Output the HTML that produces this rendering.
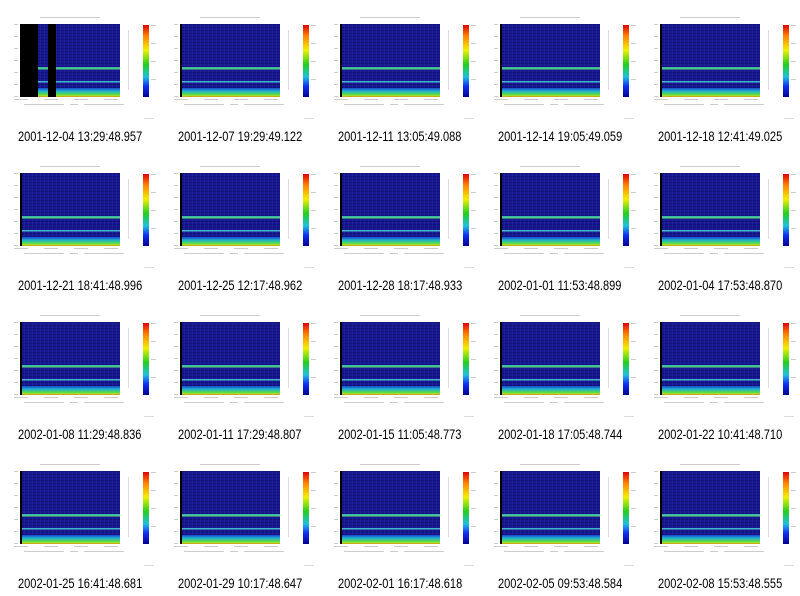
<!DOCTYPE html>
<html><head><meta charset="utf-8"><style>
body{margin:0;width:800px;height:596px;background:#fff;position:relative;overflow:hidden;font-family:"Liberation Sans",sans-serif}
.c{position:absolute;width:160px;height:149px}
.t{position:absolute;left:40px;top:17px;width:60px;height:1px;background:#ccc}
.p{position:absolute;left:20px;top:24px;width:100px;height:73px;
background:
linear-gradient(to bottom,transparent 0,transparent 59%,#30b0b0 59%,#60d880 62%,transparent 62%,transparent 78%,#40b0d0 78%,#40c0c0 80%,transparent 80%,transparent 88%,#1850d0 88%,#20b0d0 92%,#50d850 96%,#c0e020 99%,#d04010 100%),
repeating-linear-gradient(90deg,rgba(60,80,220,.15) 0 1px,transparent 1px 4px),
repeating-linear-gradient(0deg,rgba(10,10,80,.35) 0 1px,transparent 1px 3px),
#181890}
.p::before{content:"";position:absolute;left:0;top:0;width:2px;height:100%;background:#000}
.ax{position:absolute;left:14px;top:24px;width:4px;height:73px;background:repeating-linear-gradient(to bottom,#ccc 0 1px,transparent 1px 12px)}
.xl{position:absolute;left:14px;top:99px;width:112px;height:1px;background:repeating-linear-gradient(90deg,#ccc 0 14px,transparent 14px 30px)}
.xl2{position:absolute;left:24px;top:104px;width:100px;height:1px;background:linear-gradient(90deg,#ccc 0 40%,transparent 40% 46%,#ccc 46% 54%,transparent 54% 60%,#ccc 60%)}
.cb{position:absolute;left:143px;top:25px;width:6px;height:72px;background:linear-gradient(to bottom,#e00000,#ff8000 15%,#f0f000 35%,#20d020 55%,#20c0e0 72%,#1030f0 85%,#000090)}
.cl{position:absolute;left:128px;top:30px;width:1px;height:60px;background:#ddd}
.ct{position:absolute;left:151px;top:25px;width:5px;height:72px;background:repeating-linear-gradient(to bottom,#ccc 0 1px,transparent 1px 18px)}
.wm{position:absolute;left:144px;top:118px;width:10px;height:1px;background:#ddd}
.cap{position:absolute;left:18px;top:128px;font-size:14px;line-height:16px;color:#000;white-space:nowrap;transform:scaleX(0.79);transform-origin:0 0}
.b1{position:absolute;left:20px;top:24px;width:18px;height:73px;background:#000}
.b2{position:absolute;left:48px;top:24px;width:8px;height:73px;background:#000}
</style></head><body>
<div class="c" style="left:0;top:0"><div class="t"></div><div class="ax"></div><div class="p"></div><div class="b1"></div><div class="b2"></div><div class="xl"></div><div class="xl2"></div><div class="cl"></div><div class="cb"></div><div class="ct"></div><div class="wm"></div><div class="cap">2001-12-04 13:29:48.957</div></div>
<div class="c" style="left:160px;top:0"><div class="t"></div><div class="ax"></div><div class="p"></div><div class="xl"></div><div class="xl2"></div><div class="cl"></div><div class="cb"></div><div class="ct"></div><div class="wm"></div><div class="cap">2001-12-07 19:29:49.122</div></div>
<div class="c" style="left:320px;top:0"><div class="t"></div><div class="ax"></div><div class="p"></div><div class="xl"></div><div class="xl2"></div><div class="cl"></div><div class="cb"></div><div class="ct"></div><div class="wm"></div><div class="cap">2001-12-11 13:05:49.088</div></div>
<div class="c" style="left:480px;top:0"><div class="t"></div><div class="ax"></div><div class="p"></div><div class="xl"></div><div class="xl2"></div><div class="cl"></div><div class="cb"></div><div class="ct"></div><div class="wm"></div><div class="cap">2001-12-14 19:05:49.059</div></div>
<div class="c" style="left:640px;top:0"><div class="t"></div><div class="ax"></div><div class="p"></div><div class="xl"></div><div class="xl2"></div><div class="cl"></div><div class="cb"></div><div class="ct"></div><div class="wm"></div><div class="cap">2001-12-18 12:41:49.025</div></div>

<div class="c" style="left:0;top:149px"><div class="t"></div><div class="ax"></div><div class="p"></div><div class="xl"></div><div class="xl2"></div><div class="cl"></div><div class="cb"></div><div class="ct"></div><div class="wm"></div><div class="cap">2001-12-21 18:41:48.996</div></div>
<div class="c" style="left:160px;top:149px"><div class="t"></div><div class="ax"></div><div class="p"></div><div class="xl"></div><div class="xl2"></div><div class="cl"></div><div class="cb"></div><div class="ct"></div><div class="wm"></div><div class="cap">2001-12-25 12:17:48.962</div></div>
<div class="c" style="left:320px;top:149px"><div class="t"></div><div class="ax"></div><div class="p"></div><div class="xl"></div><div class="xl2"></div><div class="cl"></div><div class="cb"></div><div class="ct"></div><div class="wm"></div><div class="cap">2001-12-28 18:17:48.933</div></div>
<div class="c" style="left:480px;top:149px"><div class="t"></div><div class="ax"></div><div class="p"></div><div class="xl"></div><div class="xl2"></div><div class="cl"></div><div class="cb"></div><div class="ct"></div><div class="wm"></div><div class="cap">2002-01-01 11:53:48.899</div></div>
<div class="c" style="left:640px;top:149px"><div class="t"></div><div class="ax"></div><div class="p"></div><div class="xl"></div><div class="xl2"></div><div class="cl"></div><div class="cb"></div><div class="ct"></div><div class="wm"></div><div class="cap">2002-01-04 17:53:48.870</div></div>

<div class="c" style="left:0;top:298px"><div class="t"></div><div class="ax"></div><div class="p"></div><div class="xl"></div><div class="xl2"></div><div class="cl"></div><div class="cb"></div><div class="ct"></div><div class="wm"></div><div class="cap">2002-01-08 11:29:48.836</div></div>
<div class="c" style="left:160px;top:298px"><div class="t"></div><div class="ax"></div><div class="p"></div><div class="xl"></div><div class="xl2"></div><div class="cl"></div><div class="cb"></div><div class="ct"></div><div class="wm"></div><div class="cap">2002-01-11 17:29:48.807</div></div>
<div class="c" style="left:320px;top:298px"><div class="t"></div><div class="ax"></div><div class="p"></div><div class="xl"></div><div class="xl2"></div><div class="cl"></div><div class="cb"></div><div class="ct"></div><div class="wm"></div><div class="cap">2002-01-15 11:05:48.773</div></div>
<div class="c" style="left:480px;top:298px"><div class="t"></div><div class="ax"></div><div class="p"></div><div class="xl"></div><div class="xl2"></div><div class="cl"></div><div class="cb"></div><div class="ct"></div><div class="wm"></div><div class="cap">2002-01-18 17:05:48.744</div></div>
<div class="c" style="left:640px;top:298px"><div class="t"></div><div class="ax"></div><div class="p"></div><div class="xl"></div><div class="xl2"></div><div class="cl"></div><div class="cb"></div><div class="ct"></div><div class="wm"></div><div class="cap">2002-01-22 10:41:48.710</div></div>

<div class="c" style="left:0;top:447px"><div class="t"></div><div class="ax"></div><div class="p"></div><div class="xl"></div><div class="xl2"></div><div class="cl"></div><div class="cb"></div><div class="ct"></div><div class="wm"></div><div class="cap">2002-01-25 16:41:48.681</div></div>
<div class="c" style="left:160px;top:447px"><div class="t"></div><div class="ax"></div><div class="p"></div><div class="xl"></div><div class="xl2"></div><div class="cl"></div><div class="cb"></div><div class="ct"></div><div class="wm"></div><div class="cap">2002-01-29 10:17:48.647</div></div>
<div class="c" style="left:320px;top:447px"><div class="t"></div><div class="ax"></div><div class="p"></div><div class="xl"></div><div class="xl2"></div><div class="cl"></div><div class="cb"></div><div class="ct"></div><div class="wm"></div><div class="cap">2002-02-01 16:17:48.618</div></div>
<div class="c" style="left:480px;top:447px"><div class="t"></div><div class="ax"></div><div class="p"></div><div class="xl"></div><div class="xl2"></div><div class="cl"></div><div class="cb"></div><div class="ct"></div><div class="wm"></div><div class="cap">2002-02-05 09:53:48.584</div></div>
<div class="c" style="left:640px;top:447px"><div class="t"></div><div class="ax"></div><div class="p"></div><div class="xl"></div><div class="xl2"></div><div class="cl"></div><div class="cb"></div><div class="ct"></div><div class="wm"></div><div class="cap">2002-02-08 15:53:48.555</div></div>
</body></html>
